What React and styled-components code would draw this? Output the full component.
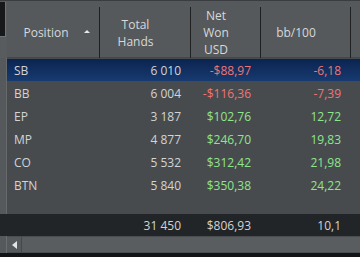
import React from 'react'
import styled, { createGlobalStyle } from 'styled-components'

const GlobalStyle = createGlobalStyle`
  html, body {
    margin: 0;
    padding: 0;
    background: #111314;
  }
  body {
    font-family: "Open Sans", "Noto Sans", sans-serif;
  }
`;

const rows = [
  { pos: 'SB', hands: '6 010', won: '-$88,97', bb: '-6,18', neg: true, selected: true },
  { pos: 'BB', hands: '6 004', won: '-$116,36', bb: '-7,39', neg: true },
  { pos: 'EP', hands: '3 187', won: '$102,76', bb: '12,72' },
  { pos: 'MP', hands: '4 877', won: '$246,70', bb: '19,83' },
  { pos: 'CO', hands: '5 532', won: '$312,42', bb: '21,98' },
  { pos: 'BTN', hands: '5 840', won: '$350,38', bb: '24,22' },
];

// column template shared by header, rows and footer
const cols = '93px 91px 70px 90px 1fr';

const Frame = styled.div`
  width: 360px;
  height: 257px;
  display: grid;
  grid-template-columns: 7px 1fr;
  grid-template-rows: 1px 57px 156px 22px 17px 4px;
  background: #111314;
  overflow: hidden;
  font-size: 12px;
  color: #d2d4d5;
`;

const TopLine = styled.div`
  grid-column: 1 / 3;
  background: #3a3d40;
`;

const Corner = styled.div`
  background: #585c5f;
  padding-top: 1px;
  div {
    width: 5px;
    height: 34px;
    background: #161819;
    border-right: 1px solid #6e7275;
    border-bottom: 1px solid #6e7275;
  }
`;

const Gutter = styled.div`
  background: #55595c;
  border-right: 1px solid ${p => p.$line || '#66696c'};
`;

const Header = styled.div`
  display: grid;
  grid-template-columns: ${cols};
  background: #56595b;
  border-bottom: 1px solid #45484a;
`;

// headers keep room on the right for the sort arrow, so the text sits left of centre
const HeadCell = styled.div`
  position: relative;
  display: flex;
  align-items: center;
  justify-content: center;
  text-align: center;
  line-height: 17px;
  color: #d6d8d9;
  border-right: ${p => (p.$sep ? '1px solid #1e2022' : 'none')};
  margin: 6px 0 2px;
  padding-right: ${p => p.$pad || 19}px;
`;

const SortArrow = styled.span`
  position: absolute;
  right: 9px;
  top: 23px;
  width: 0;
  height: 0;
  border-left: 3.5px solid transparent;
  border-right: 3.5px solid transparent;
  border-bottom: 3.5px solid #e6e8e9;
`;

const Body = styled.div`
  background: #474b4e;
  padding-top: 1px;
`;

const Row = styled.div`
  display: grid;
  grid-template-columns: ${cols};
  height: 23px;
  align-items: center;
  background: ${p => (p.$selected ? 'linear-gradient(#0b2450, #173a70)' : 'transparent')};
  ${p => p.$selected && 'height: 22px; margin-bottom: 1px;'}
`;

const Cell = styled.div`
  text-align: ${p => (p.$left ? 'left' : 'right')};
  padding: ${p => (p.$left ? '0 0 0 7px' : '0 10px 0 0')};
  color: ${p => p.$tone === 'neg' ? '#f07575' : p.$tone === 'pos' ? '#8fe58a' : '#d2d4d5'};
  white-space: nowrap;
`;

const Footer = styled.div`
  display: grid;
  grid-template-columns: ${cols};
  align-items: center;
  background: #222527;
`;

const FootGutter = styled.div`
  background: #222527;
`;

const ScrollBar = styled.div`
  display: flex;
  background: #595d60;
  border-top: 1px solid #4a4d50;
  border-bottom: 1px solid #4a4d50;
`;

const ScrollBtn = styled.div`
  width: 14px;
  display: flex;
  align-items: center;
  justify-content: center;
  background: #55595c;
  border-right: 1px solid #45484b;
  span {
    width: 0;
    height: 0;
    border-top: 4px solid transparent;
    border-bottom: 4px solid transparent;
    border-right: 5px solid #e2e4e5;
  }
`;

const Bottom = styled.div`
  grid-column: 1 / 3;
  background: #111314;
`;

export default function App() {
  return (
    <>
      <GlobalStyle />
      <Frame>
        <TopLine />
        <Corner><div /></Corner>
        <Header>
          <HeadCell $sep $pad={14}>
            Position
            <SortArrow />
          </HeadCell>
          <HeadCell $sep>Total<br />Hands</HeadCell>
          <HeadCell $sep>Net<br />Won<br />USD</HeadCell>
          <HeadCell $sep>bb/100</HeadCell>
          <HeadCell />
        </Header>
        <Gutter />
        <Body>
          {rows.map(r => (
            <Row key={r.pos} $selected={r.selected}>
              <Cell $left>{r.pos}</Cell>
              <Cell>{r.hands}</Cell>
              <Cell $tone={r.neg ? 'neg' : 'pos'}>{r.won}</Cell>
              <Cell $tone={r.neg ? 'neg' : 'pos'}>{r.bb}</Cell>
              <Cell />
            </Row>
          ))}
        </Body>
        <FootGutter />
        <Footer>
          <Cell $left />
          <Cell>31 450</Cell>
          <Cell>$806,93</Cell>
          <Cell>10,1</Cell>
          <Cell />
        </Footer>
        <Gutter $line="#6a6e71" />
        <ScrollBar>
          <ScrollBtn><span /></ScrollBtn>
        </ScrollBar>
        <Bottom />
      </Frame>
    </>
  );
}
